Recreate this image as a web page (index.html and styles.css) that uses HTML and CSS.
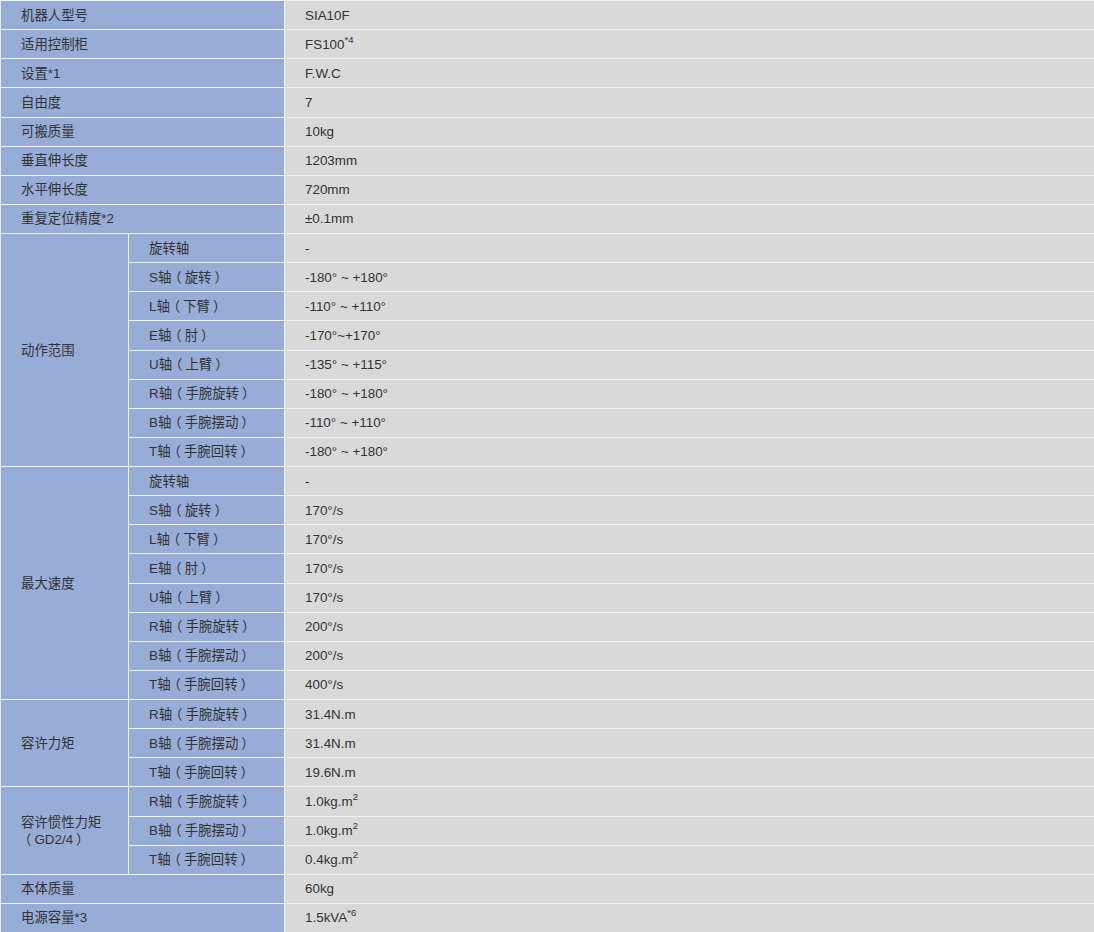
FILE: index.html
```html
<!DOCTYPE html>
<html lang="zh">
<head>
<meta charset="utf-8">
<link rel="stylesheet" href="styles.css">
</head>
<body>
<table class="spec">
<colgroup><col class="c1"><col class="c2"><col class="c3"></colgroup>
<tbody>
<tr><th colspan="2">机器人型号</th><td>SIA10F</td></tr>
<tr><th colspan="2">适用控制柜</th><td>FS100<sup>*4</sup></td></tr>
<tr><th colspan="2">设置*1</th><td>F.W.C</td></tr>
<tr><th colspan="2">自由度</th><td>7</td></tr>
<tr><th colspan="2">可搬质量</th><td>10kg</td></tr>
<tr><th colspan="2">垂直伸长度</th><td>1203mm</td></tr>
<tr><th colspan="2">水平伸长度</th><td>720mm</td></tr>
<tr><th colspan="2">重复定位精度*2</th><td>±0.1mm</td></tr>
<tr><th rowspan="8">动作范围</th><th>旋转轴</th><td>-</td></tr>
<tr><th>S轴<span class="po">（</span>旋转<span class="pc">）</span></th><td>-180° ~ +180°</td></tr>
<tr><th>L轴<span class="po">（</span>下臂<span class="pc">）</span></th><td>-110° ~ +110°</td></tr>
<tr><th>E轴<span class="po">（</span>肘<span class="pc">）</span></th><td>-170°~+170°</td></tr>
<tr><th>U轴<span class="po">（</span>上臂<span class="pc">）</span></th><td>-135° ~ +115°</td></tr>
<tr><th>R轴<span class="po">（</span>手腕旋转<span class="pc">）</span></th><td>-180° ~ +180°</td></tr>
<tr><th>B轴<span class="po">（</span>手腕摆动<span class="pc">）</span></th><td>-110° ~ +110°</td></tr>
<tr><th>T轴<span class="po">（</span>手腕回转<span class="pc">）</span></th><td>-180° ~ +180°</td></tr>
<tr><th rowspan="8">最大速度</th><th>旋转轴</th><td>-</td></tr>
<tr><th>S轴<span class="po">（</span>旋转<span class="pc">）</span></th><td>170°/s</td></tr>
<tr><th>L轴<span class="po">（</span>下臂<span class="pc">）</span></th><td>170°/s</td></tr>
<tr><th>E轴<span class="po">（</span>肘<span class="pc">）</span></th><td>170°/s</td></tr>
<tr><th>U轴<span class="po">（</span>上臂<span class="pc">）</span></th><td>170°/s</td></tr>
<tr><th>R轴<span class="po">（</span>手腕旋转<span class="pc">）</span></th><td>200°/s</td></tr>
<tr><th>B轴<span class="po">（</span>手腕摆动<span class="pc">）</span></th><td>200°/s</td></tr>
<tr><th>T轴<span class="po">（</span>手腕回转<span class="pc">）</span></th><td>400°/s</td></tr>
<tr><th rowspan="3">容许力矩</th><th>R轴<span class="po">（</span>手腕旋转<span class="pc">）</span></th><td>31.4N.m</td></tr>
<tr><th>B轴<span class="po">（</span>手腕摆动<span class="pc">）</span></th><td>31.4N.m</td></tr>
<tr><th>T轴<span class="po">（</span>手腕回转<span class="pc">）</span></th><td>19.6N.m</td></tr>
<tr><th rowspan="3">容许惯性力矩<br><span class="po">（</span>GD2/4<span class="pc">）</span></th><th>R轴<span class="po">（</span>手腕旋转<span class="pc">）</span></th><td>1.0kg.m<sup>2</sup></td></tr>
<tr><th>B轴<span class="po">（</span>手腕摆动<span class="pc">）</span></th><td>1.0kg.m<sup>2</sup></td></tr>
<tr><th>T轴<span class="po">（</span>手腕回转<span class="pc">）</span></th><td>0.4kg.m<sup>2</sup></td></tr>
<tr><th colspan="2">本体质量</th><td>60kg</td></tr>
<tr><th colspan="2">电源容量*3</th><td>1.5kVA<sup>*6</sup></td></tr>
</tbody>
</table>
</body>
</html>
```

FILE: styles.css
```css
html, body {
  margin: 0;
  padding: 0;
  background: #ffffff;
}
.spec {
  width: 1094px;
  border-collapse: collapse;
  table-layout: fixed;
  font-family: "Liberation Sans", "Noto Sans CJK SC", Arial, sans-serif;
  font-size: 13.4px;
  color: #333333;
  border-top: 1px solid #e6e6e6;
}
.c1 { width: 128px; }
.c2 { width: 156px; }
.c3 { width: auto; }
.spec th,
.spec td {
  height: 29.13px;
  padding: 0 0 0 20px;
  border: 1px solid #f2f2f2;
  text-align: left;
  font-weight: normal;
  line-height: 17px;
  vertical-align: middle;
  box-sizing: border-box;
}
.spec tr > :first-child { border-left: 1px solid #eaeaea; }
.spec tr > :last-child { border-right: none; }
.spec th {
  background: #98acd8;
}
.spec td {
  background: #d9d9d9;
}
.spec .po,
.spec .pc {
  font-feature-settings: "halt" 1;
}
.spec .po {
  padding-left: 3.7px;
  padding-right: 3px;
}
.spec .pc {
  padding-left: 3px;
  padding-right: 3.7px;
}
.spec sup {
  font-size: 9.5px;
  line-height: 0;
  vertical-align: 6px;
}
```
